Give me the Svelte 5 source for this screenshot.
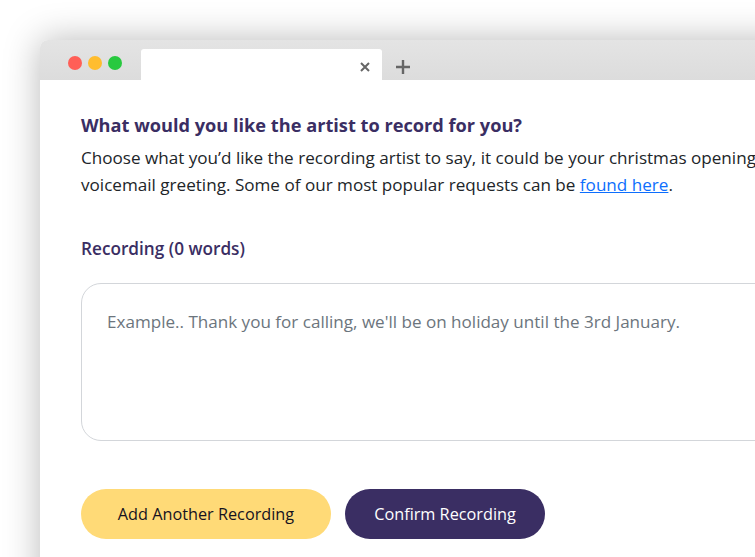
<script>
    const tab_close = '×';
</script>

<div class="page">
    <div class="window">
        <div class="chrome">
            <div class="lights">
                <span class="light red"></span>
                <span class="light amber"></span>
                <span class="light green"></span>
            </div>
            <div class="tab">
                <svg class="close" width="10" height="10" viewBox="0 0 10 10" aria-label={tab_close}>
                    <path d="M1 1 L9 9 M9 1 L1 9" />
                </svg>
            </div>
            <svg class="plus" width="14" height="14" viewBox="0 0 14 14">
                <path d="M7 0 V14 M0 7 H14" />
            </svg>
        </div>

        <div class="content">
            <h2>What would you like the artist to record for you?</h2>
            <p>
                Choose what you’d like the recording artist to say, it could be your christmas opening<br />
                voicemail greeting. Some of our most popular requests can be <a href="#found">found here</a>.
            </p>

            <label for="recording">Recording (0 words)</label>
            <textarea id="recording" placeholder="Example.. Thank you for calling, we'll be on holiday until the 3rd January."></textarea>

            <div class="buttons">
                <button class="add">Add Another Recording</button>
                <button class="confirm">Confirm Recording</button>
            </div>
        </div>
    </div>
</div>

<style>
    :global(body) {
        margin: 0;
        background: #fff;
        overflow: hidden;
    }

    .page {
        width: 755px;
        height: 557px;
        overflow: hidden;
        padding: 40px 0 0 40px;
        box-sizing: border-box;
        font-family: "Open Sans", sans-serif;
    }

    .window {
        width: 860px;
        height: 620px;
        background: #fff;
        border-radius: 8px 0 0 0;
        box-shadow: 0 0 36px rgba(0, 0, 0, 0.28);
    }

    .chrome {
        display: flex;
        align-items: flex-end;
        height: 40px;
        background: linear-gradient(#e4e4e4, #dcdcdc);
        border-radius: 8px 0 0 0;
    }

    .lights {
        display: flex;
        gap: 6px;
        align-self: flex-start;
        padding: 16px 0 0 28px;
        width: 73px;
    }

    .light {
        width: 14px;
        height: 14px;
        border-radius: 50%;
    }

    .red { background: #ff5f57; }
    .amber { background: #ffbd2e; }
    .green { background: #28c93f; }

    .tab {
        display: flex;
        align-items: center;
        justify-content: flex-end;
        box-sizing: border-box;
        width: 241px;
        height: 31px;
        padding: 4px 12px 0 0;
        background: #fff;
        border-radius: 3px 3px 0 0;
    }

    .close path {
        stroke: #666;
        stroke-width: 2;
        fill: none;
    }

    .plus {
        margin: 0 0 6px 14px;
    }

    .plus path {
        stroke: #666;
        stroke-width: 2.4;
        fill: none;
    }

    .content {
        padding: 32px 0 0 41px;
        color: #212529;
    }

    h2 {
        margin: 0;
        font-size: 18.2px;
        line-height: 26px;
        font-weight: 700;
        color: #3a2e63;
    }

    p {
        margin: 6px 0 0;
        font-size: 17.1px;
        line-height: 27px;
        white-space: nowrap;
    }

    a {
        color: #0d6efd;
    }

    label {
        display: block;
        margin-top: 38px;
        font-size: 17.2px;
        line-height: 26px;
        font-weight: 600;
        color: #3a2e63;
    }

    textarea {
        display: block;
        box-sizing: border-box;
        width: 760px;
        height: 158px;
        margin-top: 21px;
        padding: 25px;
        border: 1px solid #d3d6da;
        border-radius: 20px;
        font: 17.07px/26px "Open Sans", sans-serif;
        resize: none;
        outline: none;
    }

    textarea::placeholder {
        color: #6c757d;
        opacity: 1;
    }

    .buttons {
        display: flex;
        gap: 14px;
        margin-top: 48px;
    }

    button {
        height: 50px;
        border: none;
        border-radius: 25px;
        font: 16.25px "Open Sans", sans-serif;
    }

    .add {
        width: 250px;
        background: #ffda77;
        color: #16121f;
    }

    .confirm {
        width: 200px;
        background: #3a2e63;
        color: #fff;
    }
</style>
